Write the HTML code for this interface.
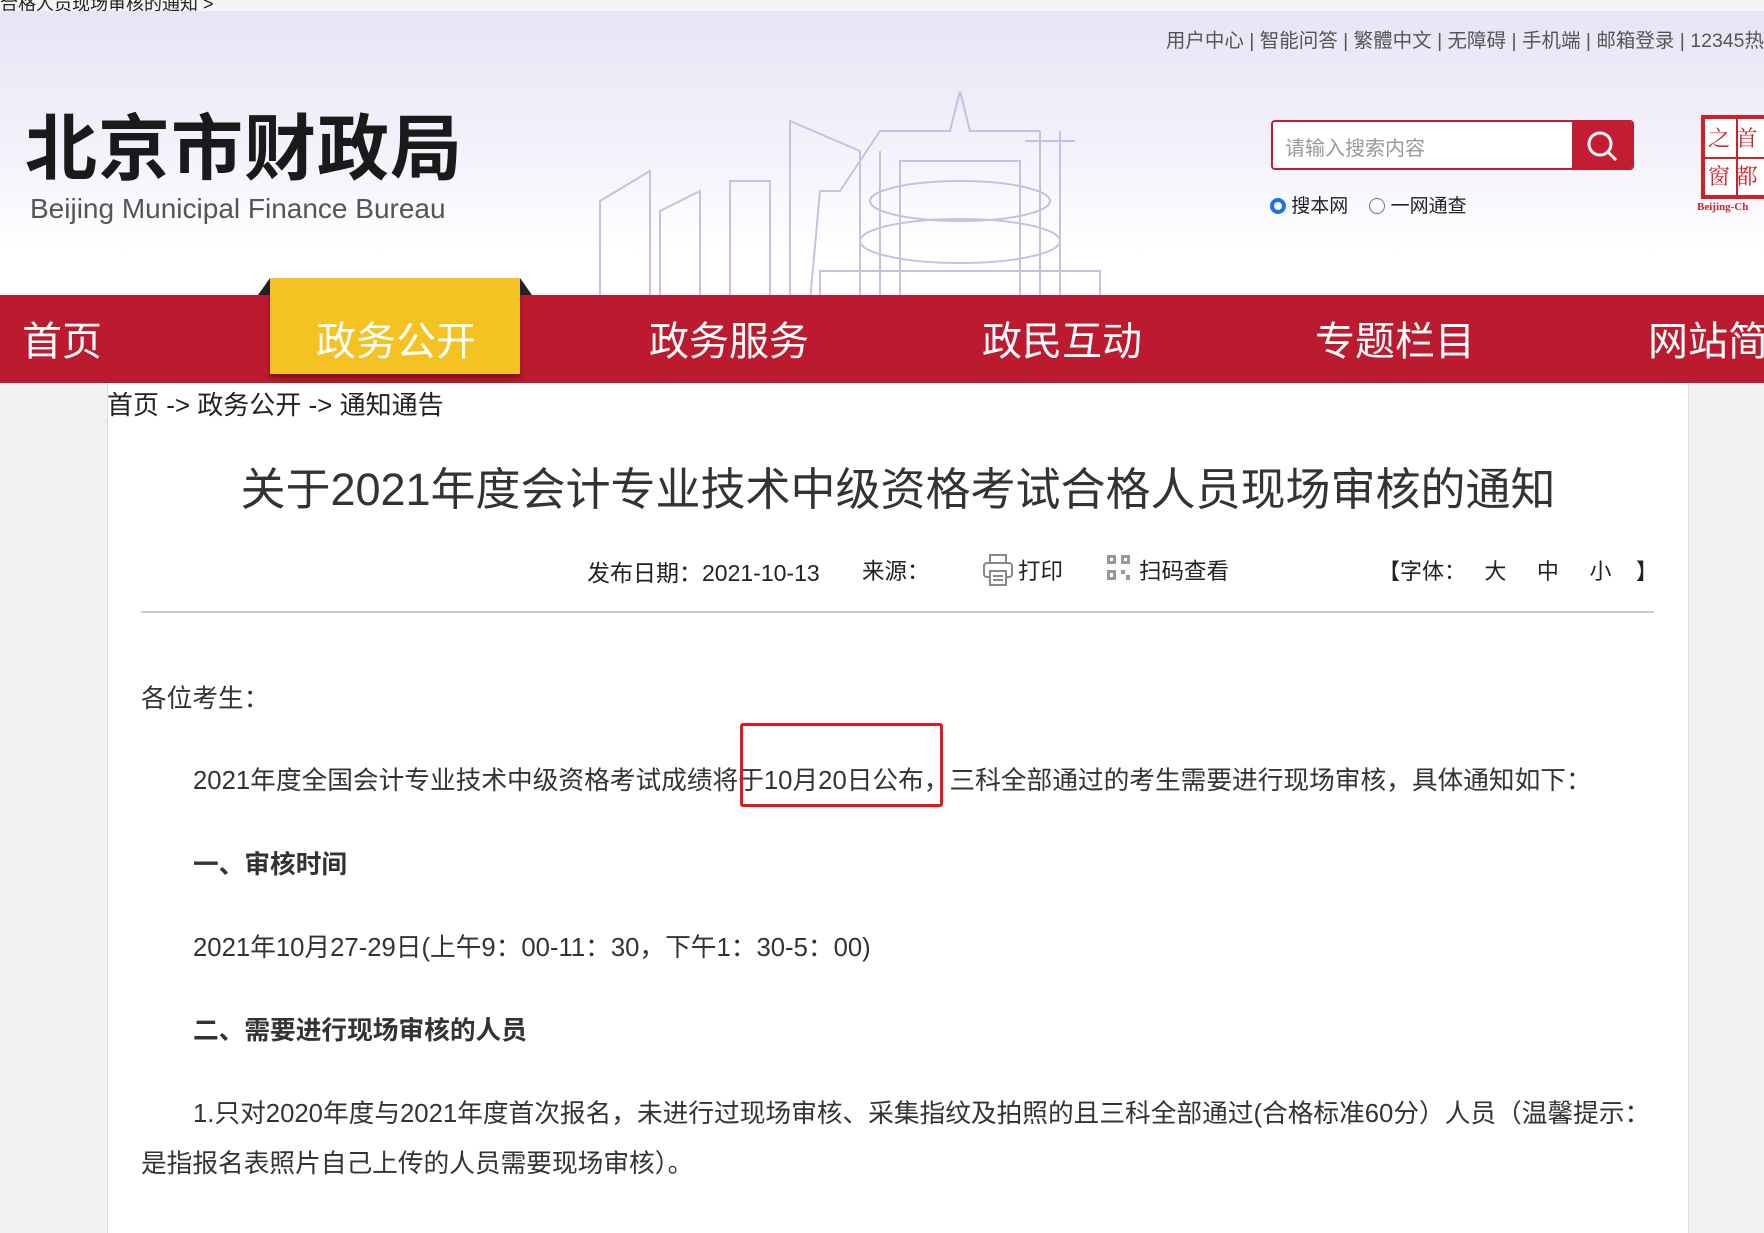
<!DOCTYPE html>
<html><head><meta charset="utf-8">
<style>
*{margin:0;padding:0;box-sizing:border-box}
html,body{width:1764px;height:1233px;overflow:hidden}
body{background:#f2f2f2;font-family:"Liberation Sans","Noto Sans CJK SC",sans-serif;color:#333}
#wrap{position:relative;width:1764px;height:1233px;overflow:hidden}
.abs{position:absolute;white-space:nowrap}
#topbar{left:0;top:0;width:1764px;height:11px;background:#f4f4f4;font-size:18px;line-height:8px;color:#222;overflow:hidden}
#header{left:0;top:11px;width:1764px;height:284px;background:linear-gradient(180deg,#e9e4f6 0%,#f3f0fa 45%,#fff 85%)}
#nav{left:0;top:295px;width:1764px;height:88px;background:#bc1a2e}
.nv{position:absolute;top:24px;font-size:40px;color:#fff;line-height:46px}
#tab{left:270px;top:278px;width:250px;height:96px;background:#f5c223;box-shadow:0 4px 4px rgba(0,0,0,.35)}
#content{left:107px;top:383px;width:1582px;height:850px;background:#fff;border-left:1px solid #cfe0f0;border-right:1px solid #cfe0f0}
p.t{position:absolute;font-size:25.7px;color:#333;white-space:nowrap}
</style></head><body><div id="wrap">
<div class="abs" id="topbar">合格人员现场审核的通知 &gt;</div>
<div class="abs" id="header">
 <svg class="abs" style="left:580px;top:60px" width="680" height="230" viewBox="0 0 680 230" fill="none" stroke="#c9bfe3" stroke-width="2">
  <path d="M460 230 V60 M480 230V60 M445 70h50"/>
  <path d="M380 20 L370 60 H300 L260 120 H240 L230 230 M380 20 L390 60 H460"/>
  <ellipse cx="380" cy="130" rx="90" ry="20"/><ellipse cx="380" cy="170" rx="100" ry="22"/>
  <rect x="320" y="90" width="120" height="140"/><rect x="240" y="200" width="280" height="30"/>
  <path d="M280 230 V80 L210 50 V230 M300 230V80"/><rect x="150" y="110" width="40" height="120"/>
  <path d="M20 230V130 L70 100 V230 M80 230V140 L120 120V230"/>
 </svg>
 <div class="abs" style="right:0;top:13px;font-size:19.5px;color:#555">用户中心 | 智能问答 | 繁體中文 | 无障碍 | 手机端 | 邮箱登录 | 12345热</div>
 <div class="abs" style="left:25px;top:101px;font-size:72px;font-weight:bold;color:#1a1a1a;line-height:76px;letter-spacing:1px">北京市财政局</div>
 <div class="abs" style="left:30px;top:182px;font-size:28px;color:#555">Beijing Municipal Finance Bureau</div>
 <div class="abs" style="left:1271px;top:109px;width:363px;height:50px;border:2px solid #c41c30;border-radius:4px;background:#fff;overflow:hidden">
  <span style="position:absolute;left:12px;top:10px;font-size:20px;color:#999">请输入搜索内容</span>
  <div style="position:absolute;right:0;top:0;width:60px;height:48px;background:#c41c30">
   <svg width="60" height="48"><circle cx="28" cy="22" r="11" stroke="#fff" stroke-width="3" fill="none"/><path d="M36 30 L44 38" stroke="#fff" stroke-width="3"/></svg></div>
 </div>
 <div class="abs" style="left:1270px;top:180px;font-size:19px;color:#222">
  <span style="display:inline-block;width:16px;height:16px;border-radius:50%;border:4px solid #1a73e8;vertical-align:-2px"></span> 搜本网 &nbsp;&nbsp; 
  <span style="display:inline-block;width:16px;height:16px;border-radius:50%;border:1px solid #777;vertical-align:-2px"></span> 一网通查</div>
 <div class="abs" style="left:1701px;top:104px;width:70px;height:84px;border:3px solid #d0202a;background:#fff"></div>
 <div class="abs" style="left:1704px;top:107px;width:64px;height:78px;border:1px solid #d0202a;color:#d0202a;font-size:22px;line-height:38px;padding-left:3px;font-family:'Noto Serif CJK SC',serif;background:linear-gradient(#d0202a,#d0202a) 31px 0/2px 100% no-repeat,linear-gradient(#d0202a,#d0202a) 0 38px/100% 2px no-repeat">之&nbsp;首<br>窗&nbsp;都</div>
 <div class="abs" style="left:1697px;top:190px;font-size:11px;color:#d0202a;font-weight:bold;font-family:'Liberation Serif',serif">Beijing-Ch</div>
</div>
<div class="abs" id="nav">
 <div class="nv" style="left:22px">首页</div>
 <div class="nv" style="left:649px">政务服务</div>
 <div class="nv" style="left:982px">政民互动</div>
 <div class="nv" style="left:1315px">专题栏目</div>
 <div class="nv" style="left:1648px">网站简</div>
</div>
<div class="abs" style="left:258px;top:278px;width:0;height:0;border-left:12px solid transparent;border-bottom:17px solid #222"></div>
<div class="abs" style="left:520px;top:278px;width:0;height:0;border-right:12px solid transparent;border-bottom:17px solid #222"></div>
<div class="abs" id="tab"><div class="nv" style="left:46px;top:41px">政务公开</div></div>
<div class="abs" id="content"></div>
<div class="abs" style="left:107px;top:385px;font-size:26px;color:#222">首页 -&gt; 政务公开 -&gt; 通知通告</div>
<div class="abs" style="left:0;width:1796px;text-align:center;top:453px;font-size:45px;color:#333">关于2021年度会计专业技术中级资格考试合格人员现场审核的通知</div>
<div class="abs" style="left:587px;top:554px;font-size:23px;color:#222">发布日期：2021-10-13</div>
<div class="abs" style="left:862px;top:554px;font-size:22.5px;color:#222">来源：</div>
<svg class="abs" style="left:982px;top:553px" width="32" height="34" viewBox="0 0 32 34" fill="none" stroke="#888" stroke-width="2"><rect x="8" y="2" width="16" height="8"/><rect x="2" y="10" width="28" height="14" rx="3"/><rect x="8" y="18" width="16" height="14" fill="#fff"/><path d="M11 23h10M11 27h10"/></svg>
<div class="abs" style="left:1018px;top:554px;font-size:22.5px;color:#222">打印</div>
<svg class="abs" style="left:1107px;top:555px" width="24" height="26" viewBox="0 0 24 26" fill="#999"><rect x="0" y="0" width="9" height="9"/><rect x="14" y="0" width="9" height="9"/><rect x="0" y="15" width="9" height="10"/><rect x="14" y="15" width="4" height="4"/><rect x="19" y="20" width="4" height="5"/><rect x="3" y="3" width="3" height="3" fill="#fff"/><rect x="17" y="3" width="3" height="3" fill="#fff"/><rect x="3" y="18" width="3" height="4" fill="#fff"/></svg>
<div class="abs" style="left:1139px;top:554px;font-size:22.5px;color:#222">扫码查看</div>
<div class="abs" style="left:1378px;top:554px;font-size:22px;color:#222">【字体：&nbsp;&nbsp; 大 &nbsp;&nbsp;&nbsp; 中 &nbsp;&nbsp;&nbsp; 小 &nbsp;&nbsp; 】</div>
<div class="abs" style="left:141px;top:611px;width:1513px;height:2px;background:#ccc"></div>
<p class="t" style="left:141px;top:678px">各位考生：</p>
<p class="t" style="left:193px;top:760px">2021年度全国会计专业技术中级资格考试成绩将于10月20日公布，三科全部通过的考生需要进行现场审核，具体通知如下：</p>
<div class="abs" style="left:740px;top:723px;width:203px;height:84px;border:3px solid #e8141c;border-radius:3px"></div>
<p class="t" style="left:193px;top:844px;font-weight:bold">一、审核时间</p>
<p class="t" style="left:193px;top:927px">2021年10月27-29日(上午9：00-11：30，下午1：30-5：00)</p>
<p class="t" style="left:193px;top:1010px;font-weight:bold">二、需要进行现场审核的人员</p>
<p class="t" style="left:193px;top:1093px">1.只对2020年度与2021年度首次报名，未进行过现场审核、采集指纹及拍照的且三科全部通过(合格标准60分）人员（温馨提示：</p>
<p class="t" style="left:141px;top:1143px">是指报名表照片自己上传的人员需要现场审核）。</p>
<p class="t" style="left:193px;top:1236px">2.对于之前年度参加过现场审核，但本次报名信息有变化的人员，需要再次进行现场审核。</p>
</div></body></html>
